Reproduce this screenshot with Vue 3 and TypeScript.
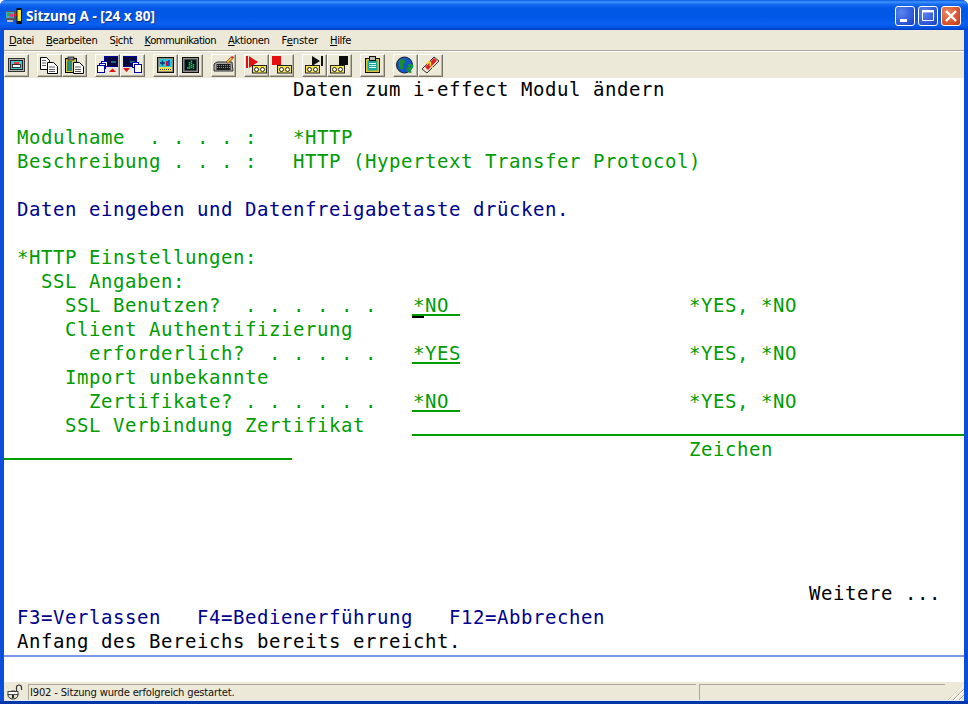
<script setup lang="ts">
interface Seg { t: string; c?: 'g' | 'b' | 'k'; field?: boolean; cursor?: boolean }

const opts: Seg = { t: '*YES, *NO', c: 'g' }
const gap = (n: number): Seg => ({ t: ' '.repeat(n) })
const lab = (t: string): Seg => ({ t: t.padEnd(34, ' '), c: 'g' })
const val = (t: string, cursor = false): Seg => ({ t, c: 'g', field: true, cursor })

const rows: Seg[][] = [
  [{ t: ' '.repeat(24) + 'Daten zum i-effect Modul ändern', c: 'k' }],
  [],
  [{ t: ' Modulname  . . . . :   *HTTP', c: 'g' }],
  [{ t: ' Beschreibung . . . :   HTTP (Hypertext Transfer Protocol)', c: 'g' }],
  [],
  [{ t: ' Daten eingeben und Datenfreigabetaste drücken.', c: 'b' }],
  [],
  [{ t: ' *HTTP Einstellungen:', c: 'g' }],
  [{ t: '   SSL Angaben:', c: 'g' }],
  [lab('     SSL Benutzen?  . . . . . .'), val('*NO ', true), gap(19), opts],
  [{ t: '     Client Authentifizierung', c: 'g' }],
  [lab('       erforderlich?  . . . . .'), val('*YES'), gap(19), opts],
  [{ t: '     Import unbekannte', c: 'g' }],
  [lab('       Zertifikate? . . . . . .'), val('*NO '), gap(19), opts],
  [lab('     SSL Verbindung Zertifikat'), val(' '.repeat(46))],
  [val(' '.repeat(24)), gap(33), { t: 'Zeichen', c: 'g' }],
  [], [], [], [], [],
  [{ t: ' '.repeat(67) + 'Weitere ...', c: 'k' }],
  [{ t: ' F3=Verlassen   F4=Bedienerführung   F12=Abbrechen', c: 'b' }],
  [{ t: ' Anfang des Bereichs bereits erreicht.', c: 'k' }],
]

const menus = [
  ['', 'D', 'atei'],
  ['', 'B', 'earbeiten'],
  ['S', 'i', 'cht'],
  ['', 'K', 'ommunikation'],
  ['', 'A', 'ktionen'],
  ['F', 'e', 'nster'],
  ['', 'H', 'ilfe'],
]
</script>

<template>
  <div class="window">
    <header class="titlebar">
      <svg class="appicon" width="18" height="18" viewBox="0 0 18 18">
        <rect x="0" y="4" width="10" height="9" fill="#555" />
        <rect x="1" y="5" width="8" height="6" fill="#3ba7c9" />
        <rect x="2" y="6" width="4" height="3" fill="#3aa53a" />
        <rect x="5" y="7" width="3" height="3" fill="#d23b8a" />
        <rect x="2" y="13" width="6" height="2" fill="#bbb" />
        <path d="M9 9l2-3 1 3" fill="none" stroke="#e22" stroke-width="1.4" />
        <rect x="11.5" y="1" width="5.5" height="16" fill="#111" />
        <rect x="12.5" y="3" width="3.5" height="11" fill="#f6e61a" />
      </svg>
      <span class="title">Sitzung A - [24 x 80]</span>
      <div class="winbtns">
        <button class="wb blue" aria-label="Minimieren">
          <svg width="18" height="18" viewBox="0 0 18 18"><rect x="4" y="12" width="7" height="3" fill="#fff" /></svg>
        </button>
        <button class="wb blue" aria-label="Maximieren">
          <svg width="18" height="18" viewBox="0 0 18 18"><path d="M3.500 3.500h11v10h-11z" fill="none" stroke="#fff" /><rect x="3" y="3" width="12" height="2.400" fill="#fff" /></svg>
        </button>
        <button class="wb red" aria-label="Schließen">
          <svg width="18" height="18" viewBox="0 0 18 18"><path d="M4 4l10 10M14 4L4 14" stroke="#fff" stroke-width="2.400" /></svg>
        </button>
      </div>
    </header>

    <div class="client">
      <nav class="menubar">
        <span v-for="m in menus" :key="m[2]" class="menu">{{ m[0] }}<u>{{ m[1] }}</u>{{ m[2] }}</span>
      </nav>

      <div class="toolbar">
        <div class="tgroup">
          <button class="tb"><svg viewBox="1 1 23 21">
            <rect x="4.500" y="4.500" width="16" height="13" fill="#b4b4ac" stroke="#333" />
            <rect x="6.500" y="6.500" width="12" height="9" fill="#2fd0e0" stroke="#222" />
            <rect x="10" y="8" width="5" height="3" fill="#e23c3c" />
            <rect x="8.500" y="10.500" width="8" height="3" fill="#fff" stroke="#111" stroke-width=".8" />
          </svg></button>
        </div>
        <div class="tgroup">
          <button class="tb"><svg viewBox="1 1 23 21">
            <path d="M3.500 3.500h6l3 3v9h-9z" fill="#fff" stroke="#000" />
            <path d="M10.500 8.500h6l4 4v7h-10z" fill="#fff" stroke="#000" />
            <path d="M5 6.500h4M5 9h4M5 11.500h4M12 13h6M12 15.500h6M12 17.500h6" stroke="#333" stroke-width=".8" />
          </svg></button>
          <button class="tb"><svg viewBox="1 1 23 21">
            <rect x="3.500" y="4.500" width="11" height="14" fill="#d9c44a" stroke="#000" />
            <rect x="6" y="3" width="6" height="3" fill="#888" stroke="#000" stroke-width=".7" />
            <rect x="5" y="7" width="5" height="10" fill="#1d8f84" />
            <path d="M11.500 8.500h6l4 4v7h-10z" fill="#fff" stroke="#000" />
            <path d="M13 13h6M13 15.500h6M13 17.500h6" stroke="#333" stroke-width=".8" />
          </svg></button>
        </div>
        <div class="tgroup">
          <button class="tb"><svg viewBox="1 1 23 21">
            <rect x="9.500" y="2.500" width="13" height="10" fill="#08083f" stroke="#0000a0" />
            <path d="M16 8h5" stroke="#20d0d0" />
            <rect x="6.500" y="7.500" width="6" height="5" fill="#fff" stroke="#0000b0" />
            <rect x="4.500" y="9.500" width="6" height="5" fill="#fff" stroke="#0000b0" />
            <rect x="2.500" y="11.500" width="7" height="7" fill="#fff" stroke="#0000b0" />
            <path d="M14 18l3.500-3.500 3.500 3.500z" fill="#e01010" />
          </svg></button>
          <button class="tb"><svg viewBox="1 1 23 21">
            <rect x="3.500" y="2.500" width="13" height="10" fill="#08083f" stroke="#0000a0" />
            <path d="M10 8h5" stroke="#20d0d0" />
            <rect x="12.500" y="8.500" width="6" height="5" fill="#fff" stroke="#0000b0" />
            <rect x="14.500" y="10.500" width="7" height="8" fill="#fff" stroke="#0000b0" />
            <path d="M3 14h7l-3.500 4z" fill="#e01010" />
          </svg></button>
        </div>
        <div class="tgroup">
          <button class="tb"><svg viewBox="1 1 23 21">
            <rect x="4.500" y="3.500" width="16" height="15" fill="#8a8a82" stroke="#111" />
            <rect x="6" y="5" width="13" height="8" fill="#22cdd8" />
            <path d="M7 9h5M9.500 6.500v5" stroke="#06307c" stroke-width="1.400" />
            <rect x="13" y="7" width="2" height="5" fill="#d11" /><rect x="15" y="6" width="2" height="6" fill="#1a4cd8" />
            <rect x="6" y="13" width="13" height="4" fill="#f0e04a" />
            <path d="M7 15.500h11" stroke="#333" stroke-dasharray="1 1" />
          </svg></button>
          <button class="tb"><svg viewBox="1 1 23 21">
            <rect x="4.500" y="3.500" width="16" height="15" fill="#8a8a82" stroke="#111" />
            <rect x="6.500" y="5.500" width="12" height="11" fill="#06101a" />
            <path d="M9 14h1.500M11.500 8v7M13.500 6.500v8.500M15.500 10v5" stroke="#1bd24a" stroke-width="1.500" stroke-dasharray="1.500 .6" />
          </svg></button>
        </div>
        <div class="tgroup">
          <button class="tb"><svg viewBox="1 1 23 21">
            <path d="M3 10l3-2h15l1 9H3z" fill="#a8a8a8" stroke="#333" />
            <rect x="5.500" y="10" width="14" height="6" fill="#1c1c1c" />
            <path d="M6 11.500h13M6 13.500h13" stroke="#aaa" stroke-width=".8" stroke-dasharray="1 1" />
            <path d="M15 8l5-5 2 1.500-5 5z" fill="#e8b33c" stroke="#7a3a10" stroke-width=".7" />
            <path d="M20 3l2 1.500 1-1-2-1.500z" fill="#e11" />
          </svg></button>
        </div>
        <div class="tgroup">
          <button class="tb"><svg viewBox="1 1 23 21">
            <path d="M5 2l9 6-9 6z" fill="#e40f0f" /><rect x="2" y="2" width="2" height="12" fill="#e40f0f" />
            <rect x="8.500" y="11.500" width="14" height="7.500" fill="#f7e84f" stroke="#222" />
            <circle cx="12.500" cy="15.500" r="2" fill="#fff" stroke="#222" /><circle cx="18.500" cy="15.500" r="2" fill="#fff" stroke="#222" />
          </svg></button>
          <button class="tb"><svg viewBox="1 1 23 21">
            <rect x="3" y="2" width="9" height="9" fill="#e40f0f" />
            <rect x="8.500" y="11.500" width="14" height="7.500" fill="#f7e84f" stroke="#222" />
            <circle cx="12.500" cy="15.500" r="2" fill="#fff" stroke="#222" /><circle cx="18.500" cy="15.500" r="2" fill="#fff" stroke="#222" />
          </svg></button>
        </div>
        <div class="tgroup">
          <button class="tb"><svg viewBox="1 1 23 21">
            <path d="M10 2l8 5-8 5z" fill="#111" /><rect x="19" y="2" width="2" height="10" fill="#111" />
            <rect x="3.500" y="11.500" width="14" height="7.500" fill="#f7e84f" stroke="#222" />
            <circle cx="7.500" cy="15.500" r="2" fill="#fff" stroke="#222" /><circle cx="13.500" cy="15.500" r="2" fill="#fff" stroke="#222" />
          </svg></button>
          <button class="tb"><svg viewBox="1 1 23 21">
            <rect x="12" y="2" width="9" height="9" fill="#0c0c0c" />
            <rect x="3.500" y="11.500" width="14" height="7.500" fill="#f7e84f" stroke="#222" />
            <circle cx="7.500" cy="15.500" r="2" fill="#fff" stroke="#222" /><circle cx="13.500" cy="15.500" r="2" fill="#fff" stroke="#222" />
          </svg></button>
        </div>
        <div class="tgroup">
          <button class="tb"><svg viewBox="1 1 23 21">
            <rect x="5.500" y="4.500" width="14" height="14" fill="#d8c23a" stroke="#111" />
            <rect x="7.500" y="6.500" width="10" height="10" fill="#1aa7a0" />
            <path d="M9 9.500h7M9 11.500h7M9 13.500h7" stroke="#e6fffd" />
            <rect x="9.500" y="2.500" width="6" height="4" fill="#bdbdb5" stroke="#111" />
          </svg></button>
        </div>
        <div class="tgroup">
          <button class="tb"><svg viewBox="1 1 23 21">
            <circle cx="11.500" cy="11" r="8" fill="#1456c8" stroke="#1a1a30" />
            <path d="M6 6l5-1 2 3-3 2 1 4-3 2-2-4zM13 14l4-2 1 3-3 3z" fill="#1c8e2a" />
            <text x="14" y="19" font-family="'DejaVu Sans', sans-serif" font-weight="700" font-size="12" fill="#0ea030">?</text>
          </svg></button>
          <button class="tb"><svg viewBox="1 1 23 21">
            <path d="M4 15L16 3l5 4-12 12z" fill="#f2e6d6" stroke="#333" />
            <path d="M7 13l9-9 3 2.500-9 9.500z" fill="#d22" />
            <text x="10" y="15" font-family="'DejaVu Sans', sans-serif" font-weight="700" font-size="10" fill="#f6de2e" transform="rotate(-42 12 12)">?</text>
          </svg></button>
        </div>
      </div>

      <main class="screen">
        <div v-for="(r, i) in rows" :key="i" class="row">
          <span
            v-for="(s, j) in r"
            :key="j"
            :class="[s.c, { field: s.field, cursor: s.cursor }]"
          >{{ s.t }}</span>
        </div>
        <div class="oia"></div>
      </main>

      <footer class="status">
        <div class="lockcell">
          <svg width="18" height="16" viewBox="0 0 18 16">
            <path d="M9.500 7V3.500a2.500 2.500 0 0 1 5 0V6" fill="none" stroke="#333" stroke-width="1.200" />
            <ellipse cx="6" cy="11" rx="5" ry="4" fill="#e6e3d0" stroke="#222" />
            <rect x="1" y="7.500" width="10" height="3" fill="#fff" stroke="#222" stroke-width=".8" />
            <rect x="5" y="11" width="2" height="3" fill="#222" />
          </svg>
        </div>
        <div class="msg">I902 - Sitzung wurde erfolgreich gestartet.</div>
        <div class="blank"></div>
        <div class="grip"></div>
      </footer>
    </div>
  </div>
</template>

<style scoped>
.window {
  width: 968px;
  height: 704px;
  display: flex;
  flex-direction: column;
  overflow: hidden;
  background: linear-gradient(180deg, #0a4fdc 0 701px, #0036a8 701px);
  box-sizing: border-box;
  padding-bottom: 3px;
  border-radius: 6px 6px 0 0;
}
.titlebar {
  height: 30px;
  flex: none;
  display: flex;
  align-items: center;
  padding: 0 7px 0 5px;
  background: linear-gradient(180deg, #0a56e0 0, #3d95ff 2px, #1a6cf0 4px, #0257e6 8px, #0056e6 16px, #0a60f0 24px, #0355e8 27px, #0040c0 30px);
}
.appicon { flex: none; margin-top: 1px; }
.title {
  margin-left: 3px;
  margin-top: 2px;
  font: 700 13.500px "Noto Sans", sans-serif;
  color: #fff;
  text-shadow: 1px 1px 0 #0a2f90;
}
.winbtns { margin-left: auto; display: flex; gap: 3px; margin-top: 2px; }
.wb {
  width: 20px;
  height: 20px;
  padding: 0;
  border: 1px solid #fff;
  border-radius: 3px;
  box-sizing: border-box;
  display: block;
}
.wb svg { display: block; }
.wb.blue { background: radial-gradient(circle at 30% 30%, #5b85ee, #2c58d8 65%, #1a3cb4); }
.wb.red { background: radial-gradient(circle at 30% 30%, #ea8a63, #d8502a 65%, #b83a12); }

.client {
  flex: 1;
  min-height: 0;
  margin: 0 4px;
  display: flex;
  flex-direction: column;
  background: #ece9d8;
  border-bottom: 1px solid #dfe8fb;
}
.menubar {
  height: 20px;
  flex: none;
  display: flex;
  align-items: center;
  font: 10px "DejaVu Sans", sans-serif;
  color: #000;
}
.menu { padding: 0 6px; white-space: pre; letter-spacing: -0.35px; }
.menu:first-child { padding-left: 5px; }
.menu:nth-child(4) { letter-spacing: -0.5px; }
.menu:nth-child(6) { letter-spacing: -0.1px; }
.toolbar {
  height: 28px;
  flex: none;
  box-sizing: border-box;
  border-top: 1px solid #aca899;
  box-shadow: inset 0 1px 0 #fff;
  padding: 3px 0 0 0;
  display: flex;
  gap: 8px;
}
.tgroup { display: flex; }
.tb {
  width: 25px;
  height: 23px;
  padding: 0;
  box-sizing: border-box;
  background: #ece9d8;
  border: 1px solid;
  border-color: #fff #77756a #77756a #fff;
  box-shadow: inset -1px -1px 0 #b8b5a4;
  display: block;
}
.tb svg { display: block; width: 23px; height: 21px; }

.screen {
  flex: 1;
  min-height: 0;
  background: #fff;
  display: flex;
  flex-direction: column;
  font: 19px "DejaVu Sans Mono", monospace;
  letter-spacing: 0.56px;
}
.row {
  height: 24px;
  flex: none;
  line-height: 22px;
  white-space: pre;
  overflow: hidden;
}
.row span {
  display: inline-block;
  height: 24px;
  vertical-align: top;
  text-indent: 1px;
  margin-right: -1px;
}
.g { color: #009c00; }
.b { color: #00008f; }
.k { color: #000; }
.row .field {
  position: relative;
  height: 22px;
}
.row .field::before {
  content: "";
  position: absolute;
  left: 0;
  right: 1px;
  bottom: 0;
  height: 2px;
  background: #009c00;
}
.row .cursor::after {
  content: "";
  position: absolute;
  left: 0;
  top: 22px;
  width: 12px;
  height: 2px;
  background: #000;
}
.oia {
  height: 2px;
  flex: none;
  margin-top: 1px;
  background: #7b96ee;
}
.status {
  height: 18px;
  flex: none;
  margin-top: auto;
  display: flex;
  font: 10px "DejaVu Sans", sans-serif;
  letter-spacing: -0.19px;
  color: #111;
}
.lockcell { width: 24px; box-sizing: border-box; padding: 2px 0 0 3px; }
.lockcell svg { display: block; }
.msg {
  width: 668px;
  box-sizing: border-box;
  margin-top: 2px;
  padding-left: 1px;
  line-height: 15px;
  border-top: 1px solid #aca899;
  border-left: 1px solid #aca899;
  white-space: pre;
}
.blank {
  width: 246px;
  margin: 2px 0 0 3px;
  box-sizing: border-box;
  border-top: 1px solid #aca899;
  border-left: 1px solid #aca899;
}
.grip {
  flex: 1;
  background: repeating-linear-gradient(135deg, transparent 0 2px, #aca899 2px 3px, #fff 3px 4px);
  clip-path: polygon(100% 15%, 100% 100%, 15% 100%);
}
</style>
<style>
body { margin: 0; background: #fff; }
</style>
